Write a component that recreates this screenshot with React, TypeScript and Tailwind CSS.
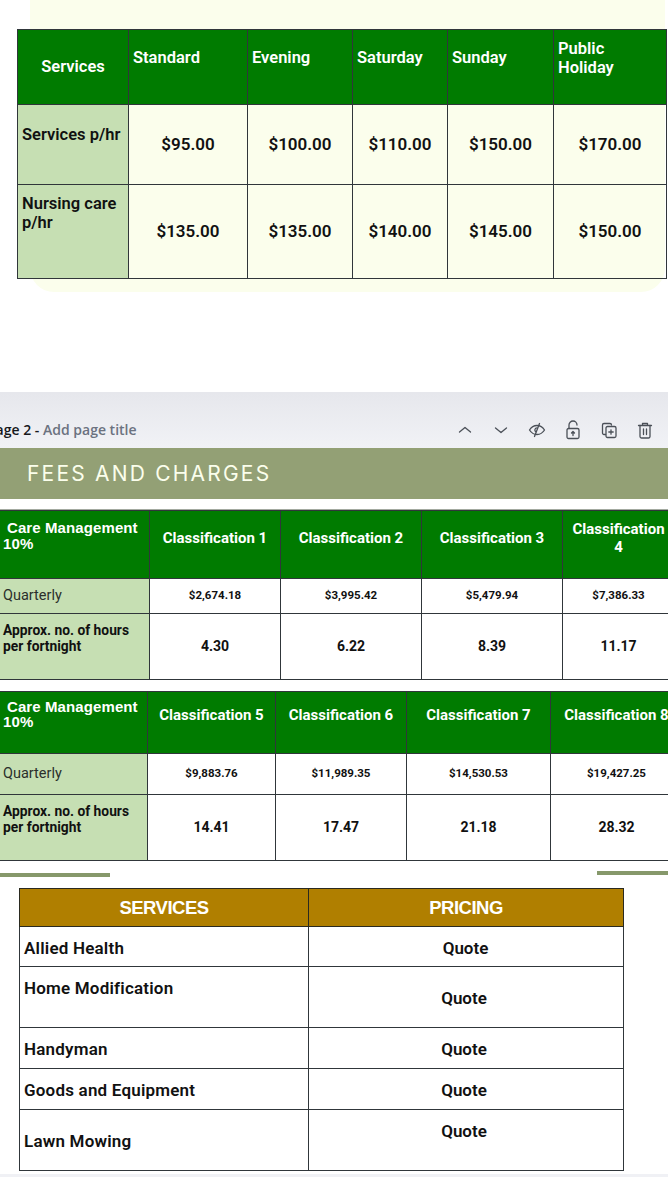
import React from 'react';

const display = "font-['Roboto',sans-serif]";

const quarterRows1 = ['$2,674.18', '$3,995.42', '$5,479.94', '$7,386.33'];
const hourRows1 = ['4.30', '6.22', '8.39', '11.17'];
const quarterRows2 = ['$9,883.76', '$11,989.35', '$14,530.53', '$19,427.25'];
const hourRows2 = ['14.41', '17.47', '21.18', '28.32'];

const rates = [
  { name: 'Services p/hr', prices: ['$95.00', '$100.00', '$110.00', '$150.00', '$170.00'] },
  { name: 'Nursing care p/hr', prices: ['$135.00', '$135.00', '$140.00', '$145.00', '$150.00'] },
];

const IconButton = ({ children }: { children: React.ReactNode }) => (
  <svg width="18" height="20" viewBox="0 0 18 20" fill="none" stroke="#4b5058" strokeWidth="1.3" strokeLinecap="round" strokeLinejoin="round">
    {children}
  </svg>
);

const PageToolbar = () => (
  <div className="h-[56px] shrink-0 bg-gradient-to-b from-[#e6e7ec] to-[#f1f2f6] flex items-end justify-between pb-[8px] pr-[14px]">
    <p className="text-[14px] leading-[20px] -ml-[13px] font-['Open_Sans',sans-serif] font-semibold text-[#16181d]">
      Page 2 - <span className="text-[#6b7280]">Add page title</span>
    </p>
    <div className="flex items-center gap-[18px]">
      <IconButton><path d="M3.5 12 9 7.5 14.5 12" /></IconButton>
      <IconButton><path d="M3.5 8 9 12.5 14.5 8" /></IconButton>
      <IconButton>
        <path d="M1.5 10C3.5 6.8 6 5.5 9 5.5s5.500 1.300 7.500 4.500c-2 3.200-4.500 4.500-7.500 4.500s-5.500-1.300-7.500-4.500Z" />
        <path d="M9 7.800a2.200 2.200 0 0 0-1.200 4" />
        <path d="M11.500 3.500 6.500 16.500" />
      </IconButton>
      <IconButton>
        <rect x="3" y="8.500" width="12" height="10" rx="1.500" />
        <path d="M5 8.500V5a4 4 0 0 1 8 0" />
        <path d="M9 15.500v-3.500M7.500 13 9 11.500 10.500 13" />
      </IconButton>
      <IconButton>
        <path d="M5.500 14.500H4a1.500 1.500 0 0 1-1.500-1.500V5A1.500 1.500 0 0 1 4 3.500h6A1.500 1.500 0 0 1 11.500 5" />
        <rect x="6" y="6.500" width="10" height="11" rx="1.500" />
        <path d="M11 9.800v4.400M8.800 12h4.400" />
      </IconButton>
      <IconButton>
        <path d="M2.500 5.500h13M6.500 5.500V3.500h5v2" />
        <path d="M4 5.500v11a1.500 1.500 0 0 0 1.500 1.500h7a1.500 1.500 0 0 0 1.500-1.500v-11" />
        <path d="M7.500 9v5.500M10.500 9v5.500" />
      </IconButton>
    </div>
  </div>
);

const ClassificationTable = ({
  className,
  widths,
  headers,
  quarterly,
  hours,
  rowHeights,
  titleCls,
  headerCls,
}: {
  className: string;
  widths: number[];
  headers: string[];
  quarterly: string[];
  hours: string[];
  rowHeights: string[];
  titleCls: string;
  headerCls: string;
}) => (
  <table className={`table-fixed border-collapse shrink-0 ${className}`} style={{ width: widths.reduce((a, b) => a + b, 0) }}>
    <colgroup>
      {widths.map((w, i) => (
        <col key={i} style={{ width: w }} />
      ))}
    </colgroup>
    <tbody>
      <tr className={rowHeights[0]}>
        <td className={`bg-[#007b00] border border-[#30363a] align-top pl-[3px] text-white text-[15px] tracking-[0.1px] font-bold font-['Liberation_Sans',sans-serif] ${titleCls}`}>
          <span className="pl-[4px]">Care Management</span>
          <br />
          10%
        </td>
        {headers.map((h) => (
          <td
            key={h}
            className={`bg-[#007b00] border border-[#30363a] text-center align-middle text-white text-[15px] leading-[18px] font-bold px-[6px] ${headerCls} ${display}`}
          >
            {h}
          </td>
        ))}
      </tr>
      <tr className={rowHeights[1]}>
        <td className={`bg-[#c6dfb3] border border-[#30363a] pl-[3px] text-[14.5px] text-[#2b2f2b] ${display}`}>Quarterly</td>
        {quarterly.map((q) => (
          <td key={q} className={`bg-white border border-[#30363a] text-center text-[11.5px] font-bold text-[#111] ${display}`}>
            {q}
          </td>
        ))}
      </tr>
      <tr className={rowHeights[2]}>
        <td className={`bg-[#c6dfb3] border border-[#30363a] pl-[3px] align-top pt-[8px] text-[13.8px] leading-[16px] font-bold text-[#111] ${display}`}>
          Approx. no. of hours
          <br />
          per fortnight
        </td>
        {hours.map((h) => (
          <td key={h} className={`bg-white border border-[#30363a] text-center text-[14px] font-bold text-[#111] ${display}`}>
            {h}
          </td>
        ))}
      </tr>
    </tbody>
  </table>
);

const quoteRows = [
  { name: 'Allied Health', nameCls: 'align-middle pt-[2px]', quoteCls: 'align-middle pt-[2px] pl-[3px]', h: 'h-[40px]' },
  { name: 'Home Modification', nameCls: 'align-top pt-[11px]', quoteCls: 'align-middle pt-[1px]', h: 'h-[61px]' },
  { name: 'Handyman', nameCls: 'align-middle pt-[1px]', quoteCls: 'align-middle pt-[1px]', h: 'h-[41px]' },
  { name: 'Goods and Equipment', nameCls: 'align-middle pt-[1px]', quoteCls: 'align-middle pt-[1px]', h: 'h-[41px]' },
  { name: 'Lawn Mowing', nameCls: 'align-middle pt-[1px]', quoteCls: 'align-top pt-[11px]', h: 'h-[61px]' },
];

export default function App() {
  return (
    <div className="w-[668px] h-[1177px] overflow-hidden bg-white flex flex-col">
      <section className="h-[392px] shrink-0">
        <div className="ml-[30px] mr-[3px] h-[292px] bg-[#fbfeec] rounded-b-[24px] pt-[29px]">
          <table className="table-fixed border-collapse -ml-[13px] w-[649px]">
            <colgroup>
              <col className="w-[111px]" />
              <col className="w-[119px]" />
              <col className="w-[105px]" />
              <col className="w-[95px]" />
              <col className="w-[106px]" />
              <col className="w-[113px]" />
            </colgroup>
            <tbody>
              <tr className="h-[75px]">
                <td className={`bg-[#007b00] border border-[#30363a] pt-[1px] text-center text-white text-[16.5px] font-semibold ${display}`}>Services</td>
                {['Standard', 'Evening', 'Saturday', 'Sunday'].map((h) => (
                  <td key={h} className={`bg-[#007b00] border border-[#30363a] pl-[4px] pb-[19px] text-white text-[16.5px] leading-[19px] font-semibold ${display}`}>
                    {h}
                  </td>
                ))}
                <td className={`bg-[#007b00] border border-[#30363a] pl-[4px] pb-[19px] text-white text-[16.5px] leading-[19px] font-semibold ${display}`}>
                  Public
                  <br />
                  Holiday
                </td>
              </tr>
              {rates.map((row, i) => (
                <tr key={row.name} className={i === 0 ? 'h-[80px]' : 'h-[94px]'}>
                  <td className={`bg-[#c6dfb3] border border-[#30363a] pl-[4px] align-top text-[16.5px] leading-[19px] font-semibold text-[#111] ${i === 0 ? 'pt-[20px]' : 'pt-[9px]'} ${display}`}>
                    {row.name}
                  </td>
                  {row.prices.map((p, j) => (
                    <td key={j} className={`border border-[#30363a] text-center text-[17px] font-semibold text-[#111] ${display}`}>
                      {p}
                    </td>
                  ))}
                </tr>
              ))}
            </tbody>
          </table>
        </div>
      </section>

      <PageToolbar />

      <div className="h-[51px] shrink-0 bg-[#93a075] flex items-center pl-[27px]">
        <h1 className="text-[21px] tracking-[2.2px] text-[#fbfeec] font-['Inter',sans-serif]">FEES AND CHARGES</h1>
      </div>

      <div className="h-[11px] shrink-0 border-b border-[#a3aaa0]" />

      <ClassificationTable
        className="-ml-[1px]"
        widths={[150, 131, 141, 141, 112]}
        headers={['Classification 1', 'Classification 2', 'Classification 3', 'Classification 4']}
        quarterly={quarterRows1}
        hours={hourRows1}
        rowHeights={['h-[68px]', 'h-[35px]', 'h-[66px]']}
        titleCls="pt-[9px] leading-[16px]"
        headerCls="pb-[14px]"
      />

      <ClassificationTable
        className="-ml-[1px] mt-[11px]"
        widths={[148, 128, 131, 144, 132]}
        headers={['Classification 5', 'Classification 6', 'Classification 7', 'Classification 8']}
        quarterly={quarterRows2}
        hours={hourRows2}
        rowHeights={['h-[62px]', 'h-[41px]', 'h-[66px]']}
        titleCls="pt-[7px] leading-[15px]"
        headerCls="pb-[16px]"
      />

      <div className="flex justify-between items-start mt-[11px] h-[16px] shrink-0">
        <div className="w-[110px] h-[4px] mt-[1px] bg-[#86986b]" />
        <div className="w-[71px] h-[4px] -mt-[1px] bg-[#86986b]" />
      </div>

      <table className={`table-fixed border-collapse ml-[19px] w-[604px] shrink-0 ${display}`}>
        <colgroup>
          <col className="w-[289px]" />
          <col className="w-[315px]" />
        </colgroup>
        <tbody>
          <tr className="h-[38px]">
            <td className="bg-[#b07f00] border border-[#2a2a20] pt-[1px] text-center text-white text-[18.500px] font-bold font-['Liberation_Sans',sans-serif] tracking-[-0.5px]">SERVICES</td>
            <td className="bg-[#b07f00] border border-[#2a2a20] pt-[1px] text-center text-white text-[18.500px] font-bold font-['Liberation_Sans',sans-serif] tracking-[-0.5px]">PRICING</td>
          </tr>
          {quoteRows.map((r) => (
            <tr key={r.name} className={r.h}>
              <td className={`border border-[#30363a] pl-[4px] text-[17px] tracking-[0.2px] leading-[20px] font-semibold text-[#111] ${r.nameCls}`}>{r.name}</td>
              <td className={`border border-[#30363a] text-center pr-[4px] text-[17px] leading-[20px] font-semibold text-[#111] ${r.quoteCls}`}>Quote</td>
            </tr>
          ))}
        </tbody>
      </table>

      <div className="mt-[3px] flex-1 bg-[#f0f1f5]" />
    </div>
  );
}
